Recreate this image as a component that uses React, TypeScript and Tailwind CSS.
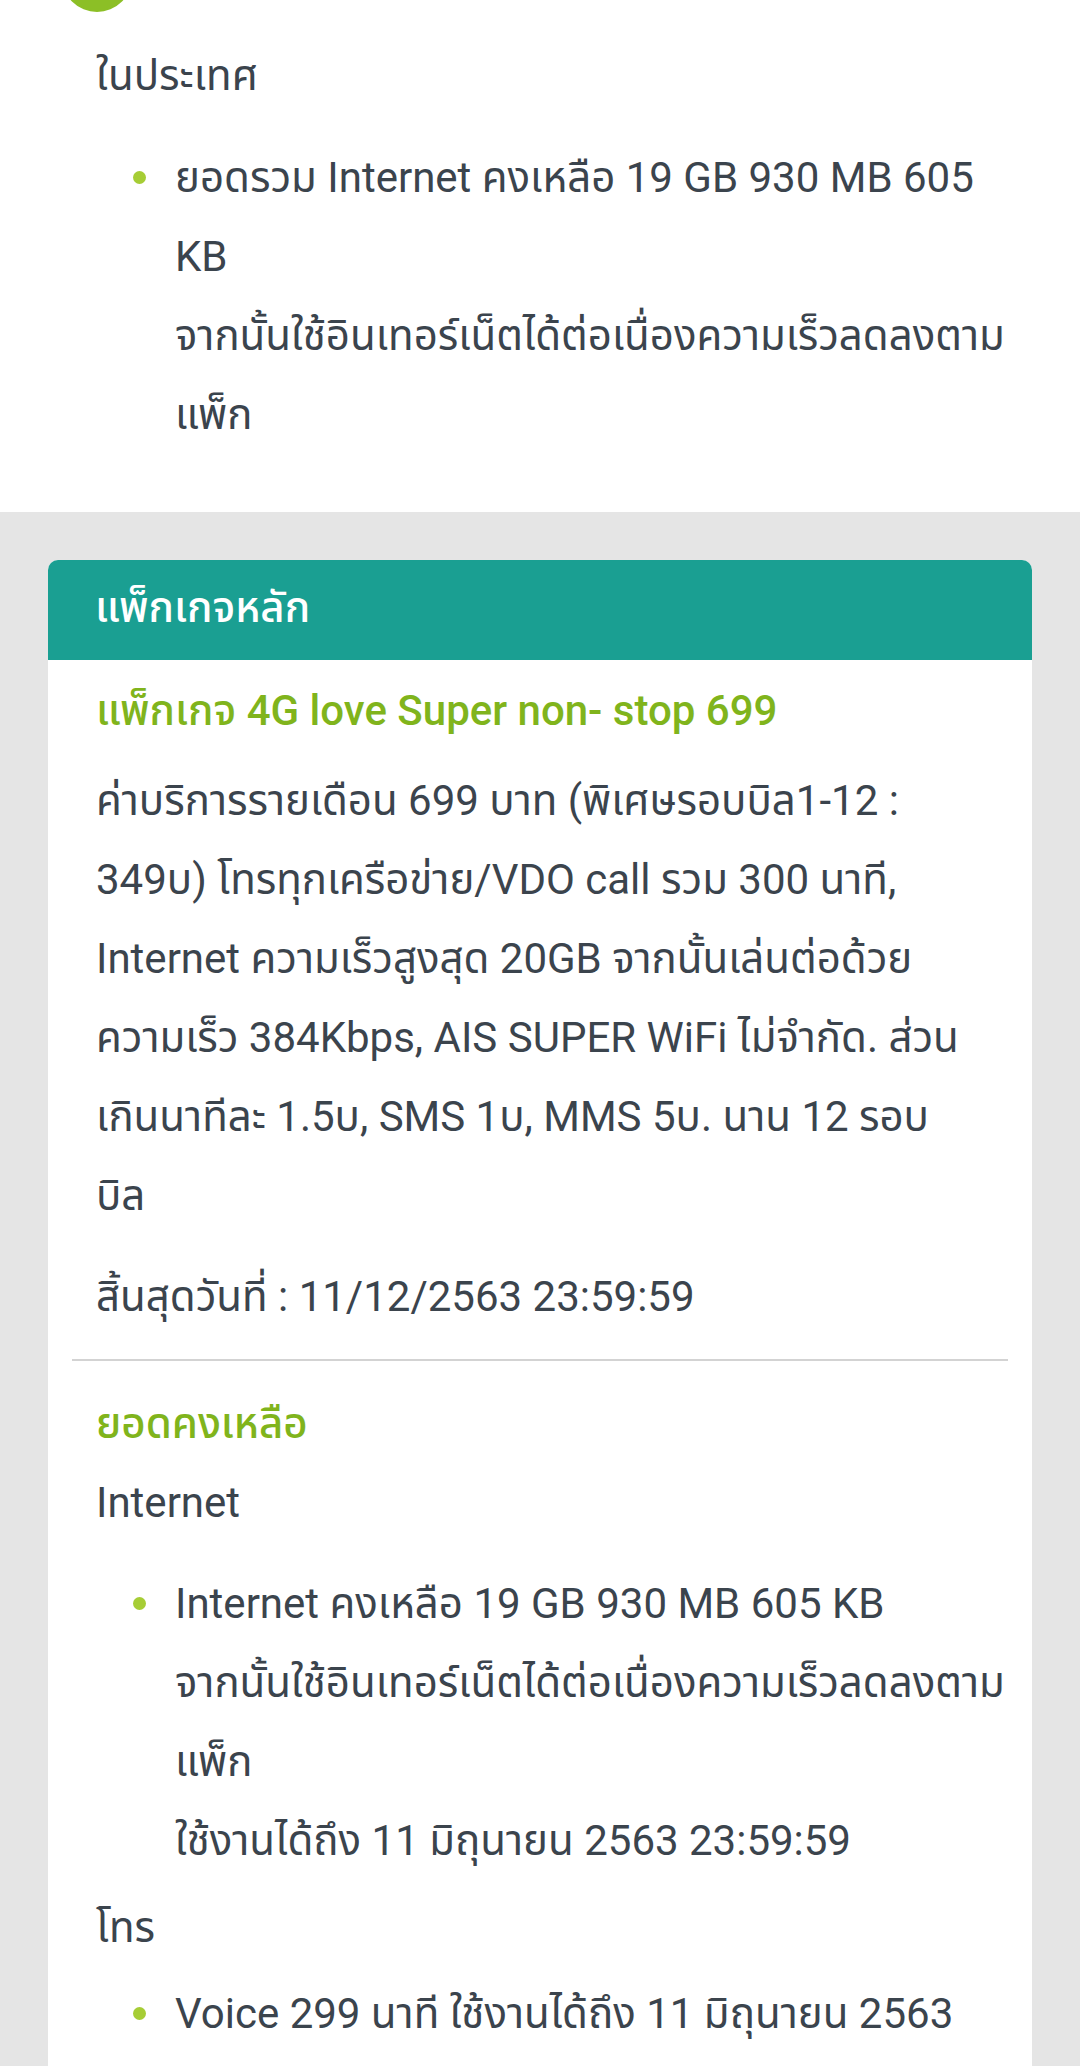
const FONT = "font-['Roboto','Noto_Sans_Thai',sans-serif]";

function Lines({ lines }: { lines: string[] }) {
  return (
    <>
      {lines.map((l, i) => (
        <span key={i} className="block whitespace-nowrap">
          {l}
        </span>
      ))}
    </>
  );
}

function Bullet({ lines }: { lines: string[] }) {
  return (
    <div className="flex">
      <div className="w-[79px] shrink-0">
        <div className="ml-[37px] mt-[33px] h-[13px] w-[13px] rounded-full bg-[#a6cd35]" />
      </div>
      <div>
        <Lines lines={lines} />
      </div>
    </div>
  );
}

export default function App() {
  return (
    <div className={`flex h-[2066px] w-[1080px] flex-col overflow-hidden bg-[#e5e5e5] text-[42px] leading-[79px] text-[#3b444d] ${FONT}`}>
      {/* top section, continuation of the previous list */}
      <div className="shrink-0 bg-white pl-[96px] pb-[58px]">
        <div className="-mt-[58px] -ml-[34px] h-[70px] w-[70px] rounded-full bg-[#8cbf26]" />
        <div className="mt-[24px]">ในประเทศ</div>
        <div className="mt-[23px]">
          <Bullet
            lines={[
              "ยอดรวม Internet คงเหลือ 19 GB 930 MB 605",
              "KB",
              "จากนั้นใช้อินเทอร์เน็ตได้ต่อเนื่องความเร็วลดลงตาม",
              "แพ็ก",
            ]}
          />
        </div>
      </div>

      {/* main package card */}
      <div className="flex flex-1 flex-col px-[48px] pt-[48px]">
        <div className="flex-1 rounded-t-[10px] bg-white">
          <div className="flex h-[100px] items-center rounded-t-[10px] bg-[#1a9f92] px-[47px] pb-[6px] font-medium text-white">
            แพ็กเกจหลัก
          </div>
          <div className="pl-[48px] pr-[24px]">
            <div className="mt-[11px] font-medium text-[#80b41c]">แพ็กเกจ 4G love Super non- stop 699</div>
            <div className="mt-[11px]">
              <Lines
                lines={[
                  "ค่าบริการรายเดือน 699 บาท (พิเศษรอบบิล1-12 :",
                  "349บ) โทรทุกเครือข่าย/VDO call รวม 300 นาที,",
                  "Internet ความเร็วสูงสุด 20GB จากนั้นเล่นต่อด้วย",
                  "ความเร็ว 384Kbps, AIS SUPER WiFi ไม่จำกัด. ส่วน",
                  "เกินนาทีละ 1.5บ, SMS 1บ, MMS 5บ. นาน 12 รอบ",
                  "บิล",
                ]}
              />
            </div>
            <div className="mt-[22px]">สิ้นสุดวันที่ : 11/12/2563 23:59:59</div>
          </div>

          <div className="mx-[24px] mt-[23px] h-[2px] bg-[#d3d3d3]" />

          <div className="pl-[48px] pr-[24px]">
            <div className="mt-[23px] font-medium text-[#80b41c]">ยอดคงเหลือ</div>
            <div>Internet</div>
            <div className="mt-[22px]">
              <Bullet
                lines={[
                  "Internet คงเหลือ 19 GB 930 MB 605 KB",
                  "จากนั้นใช้อินเทอร์เน็ตได้ต่อเนื่องความเร็วลดลงตาม",
                  "แพ็ก",
                  "ใช้งานได้ถึง 11 มิถุนายน 2563 23:59:59",
                ]}
              />
            </div>
            <div className="mt-[8px]">โทร</div>
            <div className="mt-[7px]">
              <Bullet lines={["Voice 299 นาที ใช้งานได้ถึง 11 มิถุนายน 2563"]} />
            </div>
          </div>
        </div>
      </div>
    </div>
  );
}
